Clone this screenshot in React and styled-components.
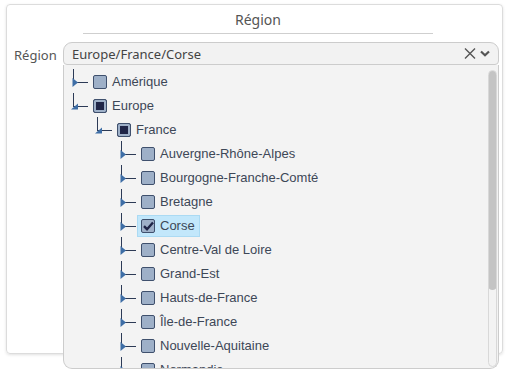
import React from "react";
import styled, { createGlobalStyle } from "styled-components";

const GlobalStyle = createGlobalStyle`
  body {
    margin: 0;
    background: #ffffff;
    font-family: "Noto Sans", "Open Sans", sans-serif;
  }
  #root {
    min-height: 100vh;
  }
`;

const tree = [
  { label: "Amérique", level: 0, state: "off", open: false },
  { label: "Europe", level: 0, state: "partial", open: true },
  { label: "France", level: 1, state: "partial", open: true },
  { label: "Auvergne-Rhône-Alpes", level: 2, state: "off" },
  { label: "Bourgogne-Franche-Comté", level: 2, state: "off" },
  { label: "Bretagne", level: 2, state: "off" },
  { label: "Corse", level: 2, state: "on", active: true },
  { label: "Centre-Val de Loire", level: 2, state: "off" },
  { label: "Grand-Est", level: 2, state: "off" },
  { label: "Hauts-de-France", level: 2, state: "off" },
  { label: "Île-de-France", level: 2, state: "off" },
  { label: "Nouvelle-Aquitaine", level: 2, state: "off" },
  { label: "Normandie", level: 2, state: "off" },
  { label: "Occitanie", level: 2, state: "off" },
  { label: "Pays de la Loire", level: 2, state: "off" },
  { label: "Provence-Alpes-Côte d'Azur", level: 2, state: "off" },
  { label: "Océanie", level: 0, state: "off", open: false },
];

const Card = styled.div`
  margin: 4px 0 0 6px;
  width: 497px;
  height: 350px;
  box-sizing: border-box;
  border: 1px solid #dcdcdc;
  border-radius: 4px;
  box-shadow: 0 1px 3px rgba(0, 0, 0, 0.12);
  padding: 0 3px 0 7px;
`;

const Title = styled.div`
  width: 350px;
  margin: 0 auto 0 69px;
  padding: 5px 0 3px;
  border-bottom: 1px solid #cfcfcf;
  text-align: center;
  font-size: 14px;
  line-height: 20px;
  color: #555;
`;

const Field = styled.div`
  display: flex;
  align-items: center;
  margin-top: 8px;
`;

const Label = styled.label`
  width: 49px;
  flex: none;
  font-size: 13px;
  color: #555;
  padding-top: 3px;
`;

const Select = styled.div`
  position: relative;
  flex: 1;
`;

const Control = styled.div`
  display: flex;
  align-items: center;
  height: 23px;
  box-sizing: border-box;
  padding: 0 8px 0 8px;
  background: #f2f2f2;
  border: 1px solid #cccccc;
  border-radius: 9px 9px 4px 4px;
  font-size: 13px;
  color: #444;
`;

const Value = styled.span`
  flex: 1;
`;

const Icons = styled.span`
  display: flex;
  align-items: center;
  gap: 4px;
  color: #555;
`;

const Menu = styled.div`
  position: absolute;
  top: 23px;
  left: 0;
  right: 0;
  height: 304px;
  box-sizing: border-box;
  display: flex;
  background: #f3f3f3;
  border: 1px solid #cccccc;
  border-top: none;
  border-radius: 0 0 9px 9px;
  overflow: hidden;
`;

const List = styled.div`
  flex: 1;
  overflow: hidden;
  padding-top: 4px;
`;

const Track = styled.div`
  width: 9px;
  flex: none;
  box-sizing: border-box;
  margin: 5px 1px 1px 0;
  border: 1px solid #d8d8d8;
  border-radius: 5px;
  overflow: hidden;
`;

const Thumb = styled.div`
  height: 220px;
  margin: -1px;
  background: #c4c4c4;
  border-radius: 5px;
`;

const Row = styled.div`
  display: flex;
  align-items: center;
  height: 24px;
  padding-left: ${(p) => 7 + p.$level * 24}px;
  font-family: "Liberation Sans", Arial, sans-serif;
  font-size: 13px;
  color: #3d4757;
  white-space: nowrap;
`;

const Node = styled.span`
  display: flex;
  align-items: center;
  gap: 5px;
  height: 22px;
  box-sizing: border-box;
  padding: 0 4px 0 ${(p) => (p.$active ? 3 : 4)}px;
  margin-top: 1px;
  background: ${(p) => (p.$active ? "#c2e7fb" : "transparent")};
  border: ${(p) => (p.$active ? "1px solid #abdaf3" : "none")};
`;

const Box = styled.span`
  width: 14px;
  height: 14px;
  box-sizing: border-box;
  flex: none;
  border-radius: 2px;
  border: 1.5px solid #3f506d;
  background: ${(p) => (p.$state === "partial" ? "#1f2547" : "#9eb0c8")};
  box-shadow: ${(p) =>
    p.$state === "partial" ? "inset 0 0 0 2px #9eb0c8" : "none"};
  display: flex;
  align-items: center;
  justify-content: center;
`;

const Connector = ({ open }) => (
  <svg width="18" height="24" viewBox="0 0 18 24" style={{ flex: "none" }}>
    <line x1="2.5" y1="0" x2="2.5" y2="14" stroke="#2c3a56" strokeWidth="1" />
    <line x1="2" y1="13.5" x2="17" y2="13.5" stroke="#2c3a56" strokeWidth="1" />
    {open ? (
      <polygon points="0,16.5 7,10.5 7,16.5" fill="#3e6ea6" />
    ) : (
      <polygon points="1.5,9 7,13.5 1.5,18" fill="#3e6ea6" />
    )}
  </svg>
);

const Check = () => (
  <svg width="11" height="10" viewBox="0 0 11 10">
    <path d="M1 5.2 L4 8.2 L10 1.5" fill="none" stroke="#1f2547" strokeWidth="2.4" />
  </svg>
);

const App = () => (
  <>
    <GlobalStyle />
    <Card>
      <Title>Région</Title>
      <Field>
        <Label>Région</Label>
        <Select>
          <Control>
            <Value>Europe/France/Corse</Value>
            <Icons>
              <svg width="12" height="11" viewBox="0 0 12 11">
                <path d="M1 0.5 L11 10.5 M11 0.5 L1 10.5" stroke="#555" strokeWidth="1.4" />
              </svg>
              <svg width="10" height="7" viewBox="0 0 10 7">
                <path d="M1 1.5 L5 5.2 L9 1.5" fill="none" stroke="#555" strokeWidth="2.2" />
              </svg>
            </Icons>
          </Control>
          <Menu>
            <List>
              {tree.map((n) => (
                <Row key={n.label} $level={n.level}>
                  <Connector open={n.open} />
                  <Node $active={n.active}>
                    <Box $state={n.state}>{n.state === "on" && <Check />}</Box>
                    {n.label}
                  </Node>
                </Row>
              ))}
            </List>
            <Track>
              <Thumb />
            </Track>
          </Menu>
        </Select>
      </Field>
    </Card>
  </>
);

export default App;
